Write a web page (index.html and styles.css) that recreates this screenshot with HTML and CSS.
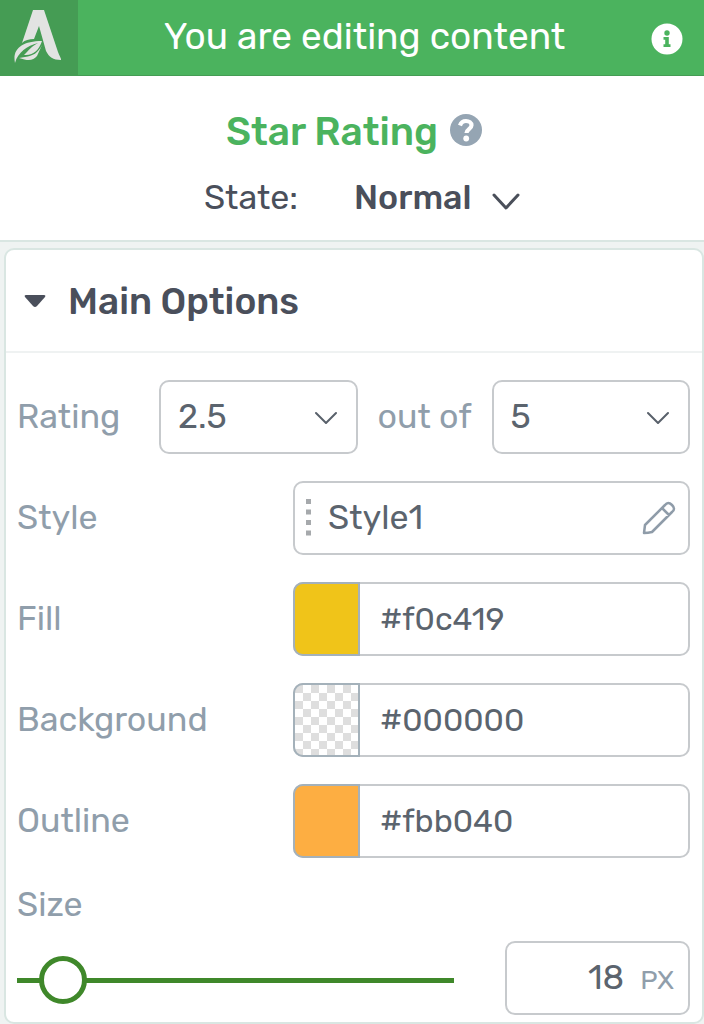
FILE: index.html
```html
<!DOCTYPE html>
<html lang="en">
<head>
    <meta charset="UTF-8">
    <meta name="viewport" content="width=device-width, initial-scale=1.0">
    <title>Star Rating</title>
    <link rel="stylesheet" href="styles.css">
</head>
<body>
    <header class="topbar">
        <a class="logo" href="#" aria-label="Home">
            <svg width="48" height="54" viewBox="0 0 48 54">
                <path fill="#e2e3e2" d="M19 1h11l13 39c1 4 3 7 4 10v1c-8 0-12-3-15-9L25 17l-5 13c-5 0-9 1-12 4z"/>
                <path fill="#e2e3e2" d="M1 54C-2 40 8 32 28 32c-3 9-9 15-18 14 5-5 8-9 14-12C13 37 4 43 1 54z"/>
                <path fill="#e2e3e2" d="M28 36c-4 8-9 11-17 12l-6 1c9 3 14 3 18-2z"/>
            </svg>
        </a>
        <div class="topbar-text">You are editing content</div>
        <button class="icon-button" type="button" aria-label="Information">
            <svg width="32" height="32" viewBox="0 0 32 32">
                <circle cx="16" cy="16" r="15.5" fill="#fff"/>
                <circle cx="16" cy="10" r="2.7" fill="#4bb35e"/>
                <path fill="#4bb35e" d="M12.5 14h5.3v7.3h1.7V24h-7v-2.7h1.7v-4.6h-1.7z"/>
            </svg>
        </button>
    </header>

    <section class="component">
        <div class="component-title">
            <h1>Star Rating</h1>
            <button class="icon-button" type="button" aria-label="Help">
                <svg width="32" height="32" viewBox="0 0 32 32">
                    <circle cx="16" cy="16" r="16" fill="#95a5b3"/>
                    <path d="M10 11.500c1-3 3-4.500 6-4.500 3 0 5.500 1.800 5.500 4.200 0 4-5 3.800-5 7.800" fill="none" stroke="#fff" stroke-width="4.200"/>
                    <circle cx="16.200" cy="24.500" r="2.900" fill="#fff"/>
                </svg>
            </button>
        </div>
        <div class="state">
            <label for="state">State:</label>
            <div class="state-select">
                <select id="state">
                    <option>Normal</option>
                    <option>Hover</option>
                </select>
                <svg width="28" height="18" viewBox="0 0 28 18"><path d="M2 2l12 13L26 2" fill="none" stroke="#4a4f5a" stroke-width="3" stroke-linecap="round" stroke-linejoin="round"/></svg>
            </div>
        </div>
    </section>

    <main class="panel">
        <h2>
            <button class="panel-head" type="button" aria-expanded="true">
                <svg width="22" height="14" viewBox="0 0 22 14"><path d="M2 1h18q2 0 1 2l-8 9q-2 2-4 0L1 3Q0 1 2 1z" fill="#4a4f5b"/></svg>
                Main Options
            </button>
        </h2>

        <div class="options">
            <div class="rating">
                <label for="rating">Rating</label>
                <div class="box select">
                    <select id="rating">
                        <option>2.5</option>
                        <option>3</option>
                    </select>
                    <svg width="22" height="14" viewBox="0 0 22 14"><path d="M1 3l10 10L21 3" fill="none" stroke="#59616b" stroke-width="2" stroke-linecap="round" stroke-linejoin="round"/></svg>
                </div>
                <label for="total">out of</label>
                <div class="box select">
                    <select id="total">
                        <option>5</option>
                        <option>10</option>
                    </select>
                    <svg width="22" height="14" viewBox="0 0 22 14"><path d="M1 3l10 10L21 3" fill="none" stroke="#59616b" stroke-width="2" stroke-linecap="round" stroke-linejoin="round"/></svg>
                </div>
            </div>

            <div class="row">
                <label for="style">Style</label>
                <button class="box style-button" id="style" type="button">
                    <svg width="6" height="38" viewBox="0 0 6 38"><path d="M0 0h5v5H0zM0 10.500h5v5H0zM0 21h5v5H0zM0 31.500h5v5H0z" fill="#a6a9ac"/></svg>
                    <span>Style1</span>
                    <svg width="34" height="34" viewBox="0 0 34 34"><path d="M2 32l1-8L23 4q3-4 7 0t0 7L10 31q-4 1-8 1zM20 7l7 7" fill="none" stroke="#8f9ca9" stroke-width="2.500" stroke-linejoin="round"/></svg>
                </button>
            </div>

            <div class="row">
                <label for="fill">Fill</label>
                <div class="box color">
                    <button class="swatch swatch-fill" type="button" aria-label="Pick fill"></button>
                    <input id="fill" type="text" value="#f0c419">
                </div>
            </div>

            <div class="row">
                <label for="background">Background</label>
                <div class="box color">
                    <button class="swatch swatch-empty" type="button" aria-label="Pick background"></button>
                    <input id="background" type="text" value="#000000">
                </div>
            </div>

            <div class="row">
                <label for="outline">Outline</label>
                <div class="box color">
                    <button class="swatch swatch-outline" type="button" aria-label="Pick outline"></button>
                    <input id="outline" type="text" value="#fbb040">
                </div>
            </div>

            <div class="size">
                <label for="size">Size</label>
                <div class="size-controls">
                    <input class="slider" id="size" type="range" min="1" max="300" value="18">
                    <div class="box number">
                        <input type="text" value="18" aria-label="Size value">
                        <button type="button">PX</button>
                    </div>
                </div>
            </div>
        </div>
    </main>
</body>
</html>
```

FILE: styles.css
```css
*{
    margin:0;
    padding:0;
    box-sizing:border-box;
}

body{
    background:#eff3f2;
    color:#4a4f5b;
    font-family:Rubik, Roboto, sans-serif;
    font-size:34px;
    line-height:40px;
}
button, input, select{
    font:inherit;
    color:inherit;
    background:none;
    border:0;
    outline:0;
    min-width:0;
}
button, select{
    cursor:pointer;
}
select{
    appearance:none;
}
svg{
    display:block;
    flex:none;
}

/* top bar */
.topbar{
    height:76px;
    display:flex;
    align-items:center;
    background:#4bb35e;
    border-bottom:1px solid #459c54;
    color:#fff;
}
.logo{
    width:78px;
    height:100%;
    padding:9px 0 0 14px;
    background:#459c54;
}
.topbar-text{
    flex:1;
    padding-bottom:4px;
    font-size:37px;
    text-align:center;
}
.topbar .icon-button{
    padding-top:2px;
    margin-right:21px;
}

/* component name and state */
.component{
    height:166px;
    padding-top:34px;
    background:#fff;
    border-bottom:2px solid #d9e6e2;
}
.component-title{
    display:flex;
    justify-content:center;
    align-items:center;
    padding-left:4px;
    gap:12px;
}
h1{
    color:#4bb35e;
    font-size:39px;
    font-weight:500;
    line-height:44px;
}
.component-title svg{
    margin-bottom:4px;
}
.state{
    display:flex;
    justify-content:center;
    margin-top:24px;
    padding-left:20px;
    gap:56px;
}
.state-select{
    display:flex;
    align-items:center;
    gap:20px;
}
.state-select select{
    font-weight:500;
}
.state-select svg{
    margin-top:8px;
}

/* options panel */
.panel{
    margin:6px 0 0 4px;
    background:#fff;
    border:2px solid #d9e6e2;
    border-radius:10px;
}
.panel-head{
    width:100%;
    height:103px;
    padding-left:18px;
    display:flex;
    align-items:center;
    gap:22px;
    border-bottom:2px solid #eff2f2;
    font-size:37px;
    font-weight:500;
}
.options{
    display:flex;
    flex-direction:column;
    gap:27px;
    padding:27px 12px 7px 11px;
}
label{
    color:#909eab;
}
.state label{
    color:#4a4f5b;
}
.box{
    height:74px;
    border:2px solid #c7cacd;
    border-radius:10px;
    color:#5b646e;
}
.rating{
    display:grid;
    grid-template-columns:auto 1fr auto 1fr;
    align-items:center;
    column-gap:20px;
}
.rating label:first-child{
    width:122px;
}
.select{
    display:grid;
    align-items:center;
}
.select select, .select svg{
    grid-area:1 / 1;
}
.select select{
    height:100%;
    padding-left:17px;
}
.select svg{
    justify-self:end;
    margin-right:19px;
    pointer-events:none;
}
.row{
    display:grid;
    grid-template-columns:minmax(0, 276fr) minmax(0, 397fr);
    align-items:center;
}
.style-button{
    display:flex;
    align-items:center;
    padding:0 12px 0 11px;
    gap:16px;
    text-align:left;
}
.style-button span{
    flex:1;
}
.color{
    display:flex;
}
.color input{
    flex:1;
    padding-left:20px;
    font-size:32px;
}
.swatch{
    width:67px;
    margin:-2px 0 -2px -2px;
    border:2px solid #a4b1ba;
    border-radius:10px 0 0 10px;
}
.swatch-fill{
    background:#f0c419;
}
.swatch-empty{
    background:repeating-conic-gradient(#fff 0 25%, #dedede 0 50%) 0 0 / 16px 16px;
}
.swatch-outline{
    background:#fdae42;
}

/* size */
.size label{
    display:block;
    margin-bottom:16px;
}
.size-controls{
    display:flex;
    align-items:center;
    justify-content:space-between;
}
.slider{
    appearance:none;
    width:65%;
    height:48px;
    margin-top:4px;
}
.slider::-webkit-slider-runnable-track{
    height:5px;
    background:#3f882a;
}
.slider::-webkit-slider-thumb{
    appearance:none;
    width:48px;
    height:48px;
    margin-top:-22px;
    background:#fff;
    border:5px solid #3f882a;
    border-radius:50%;
}
.number{
    width:185px;
    display:flex;
    align-items:center;
    padding-right:14px;
    gap:16px;
}
.number input{
    flex:1;
    text-align:right;
}
.number button{
    padding-top:4px;
    color:#909eab;
    font-size:27px;
}
```
